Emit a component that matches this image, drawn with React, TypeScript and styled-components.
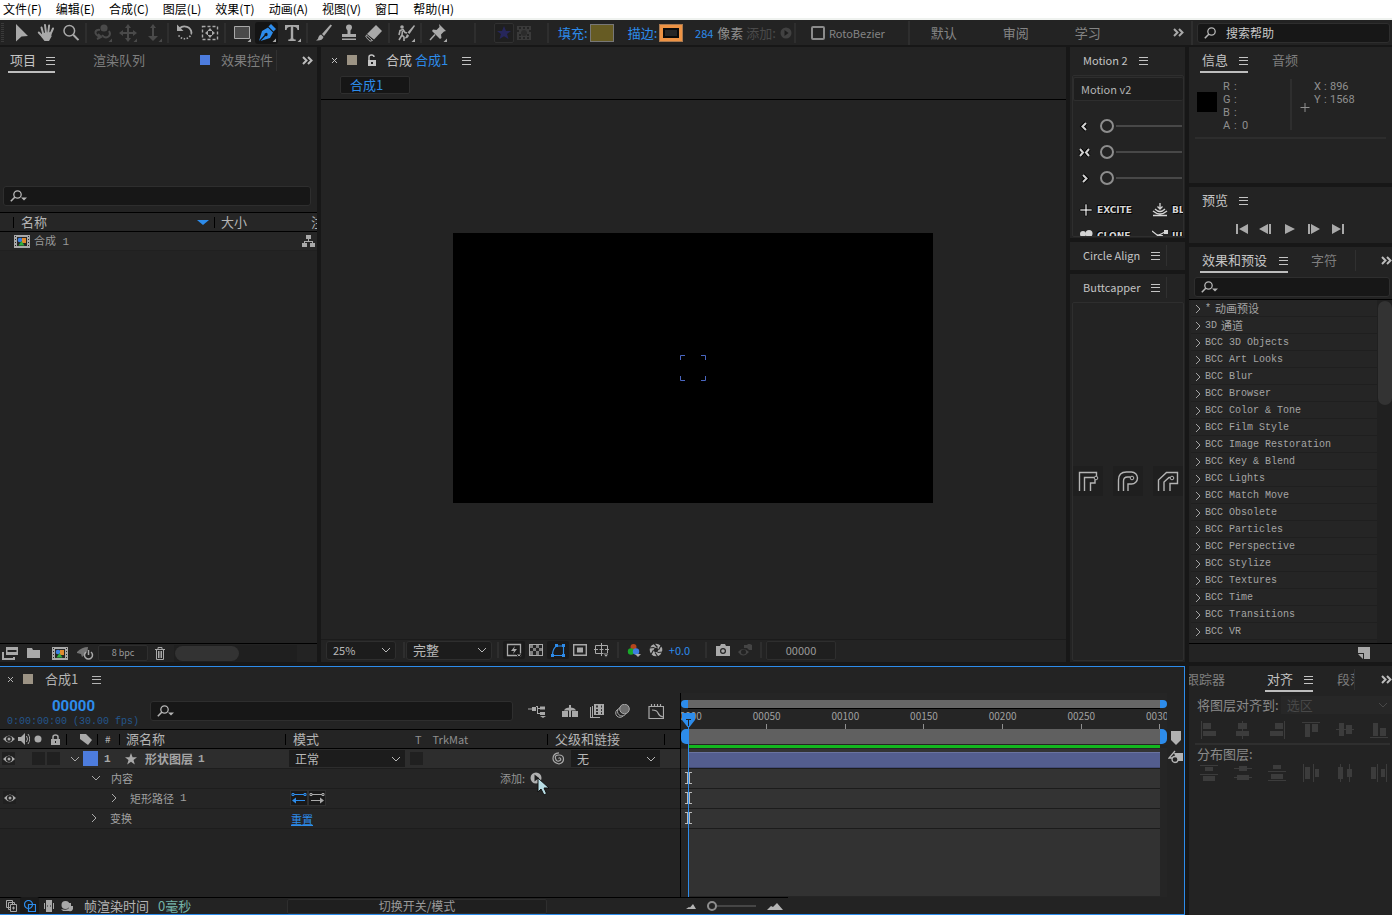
import React from 'react';
import styled, { createGlobalStyle, css } from 'styled-components';

const UI = '"Noto Sans CJK SC", "Noto Sans", sans-serif';
const MONO = '"Liberation Mono", "Noto Sans CJK SC", monospace';
const C = {
  panel: '#232323',
  gap: '#171717',
  field: '#171717',
  line: '#2e2e2e',
  row: '#262626',
  text: '#b4b4b4',
  dim: '#858585',
  off: '#3c3c3c',
  blue: '#2d8ceb',
  icon: '#a9a9a9',
};

const Global = createGlobalStyle`
  * { box-sizing: border-box; }
  body { margin: 0; background: ${C.gap}; font-family: ${UI}; font-size: 13px; line-height: 16px; color: ${C.text}; }
  button, input, select { font: inherit; color: inherit; margin: 0; padding: 0; border: 0; background: none; outline: 0; border-radius: 0; }
  button { display: flex; align-items: center; justify-content: center; white-space: nowrap; }
  svg { display: block; flex: none; }
`;

/* ---------- frame ---------- */
const Shell = styled.div`
  height: 100vh; min-height: 700px; display: flex; flex-direction: column; overflow: hidden; background: ${C.gap};
`;
const Body = styled.div`flex: 1; min-height: 0; display: flex; gap: 4px; margin-top: 2px;`;
const Main = styled.div`flex: 1; min-width: 0; display: flex; flex-direction: column; gap: 4px;`;
const Upper = styled.div`flex: 1; min-height: 0; display: flex; gap: 4px;`;
const Panel = styled.section<{ $w?: number; $h?: number; $grow?: boolean }>`
  display: flex; flex-direction: column; min-width: 0; min-height: 0; overflow: hidden; background: ${C.panel};
  flex: ${p => (p.$grow ? '1' : 'none')};
  ${p => p.$w && css`width: ${p.$w}px;`}
  ${p => p.$h && css`height: ${p.$h}px;`}
`;
const Column = styled.div<{ $w: number }>`flex: none; width: ${p => p.$w}px; display: flex; flex-direction: column; gap: 4px;`;
const Spacer = styled.div<{ $w?: number }>`flex: ${p => (p.$w ? `0 0 ${p.$w}px` : '1')};`;
const VSep = styled.i<{ $l?: number; $r?: number; $h?: number }>`
  flex: none; width: 2px; height: ${p => p.$h ?? 20}px; background: ${C.line};
  margin: 0 ${p => p.$r ?? 3}px 0 ${p => p.$l ?? 2}px;
`;
const Swatch = styled.i<{ $c: string; $s?: number }>`
  flex: none; width: ${p => p.$s ?? 10}px; height: ${p => p.$s ?? 10}px; background: ${p => p.$c};
`;

/* ---------- menu + toolbar ---------- */
const MenuBar = styled.nav`
  flex: none; display: flex; gap: 14px; height: 20px; background: #fff; border-bottom: 2px solid #eff2ef; padding-left: 3px;
`;
const MenuItem = styled.button`color: #000; font-size: 12px;`;
const ToolBar = styled.div`flex: none; height: 25px; display: flex; align-items: center; background: ${C.panel};`;
const Grip = styled.i`
  width: 3px; height: 20px; margin: 0 4px 0 1px;
  background: repeating-linear-gradient(to bottom, #3a3a3a 0 1px, transparent 1px 2px);
`;
const ToolButton = styled.button<{ $on?: boolean; $off?: boolean }>`
  flex: none; width: 25px; height: 22px; color: ${p => (p.$on ? C.blue : p.$off ? '#4a4a4a' : C.icon)};
  ${p => p.$on && css`background: #141414; border-radius: 3px; width: 23px; margin: 0 1px;`}
`;
const ModeButton = styled.button<{ $framed?: boolean }>`
  width: 20px; height: 20px; ${p => p.$framed && css`border: 1px solid #303030; background: #1f1f1f; border-radius: 2px;`}
`;
const BlueLabel = styled.button`color: ${C.blue}; font-size: 13px;`;
const FillSwatch = styled.button`width: 24px; height: 18px; background: #665b23; border: 1px solid #777; margin: 0 14px 0 2px;`;
const StrokeSwatch = styled.button`
  width: 24px; height: 18px; background: #ee9344; border: 1px solid #a8784e; margin: 0 11px 0 2px;
  &::after { content: ''; flex: none; box-sizing: border-box; width: 16px; height: 10px; background: #262626; border: 2px solid #0a0a0a; }
`;
const PxValue = styled.button`color: ${C.blue}; font-size: 11px; width: 20px; margin-right: 3px;`;
const Label = styled.span<{ $c?: string; $s?: number; $mr?: number }>`
  white-space: nowrap; color: ${p => p.$c ?? C.text}; font-size: ${p => p.$s ?? 13}px; margin-right: ${p => p.$mr ?? 0}px;
`;
const CheckLabel = styled.label`
  display: flex; align-items: center; gap: 4px; font-size: 11px; color: ${C.dim}; margin-left: 15px;
  input { appearance: none; width: 14px; height: 14px; border: 2px solid #8b8b8b; border-radius: 2px; }
`;
const Workspace = styled.button`color: ${C.dim}; margin-right: 46px;`;
const Field = styled.label<{ $l?: number; $r?: number; $t?: number; $grow?: boolean; $w?: number }>`
  display: flex; align-items: center; gap: 4px; height: 20px; padding-left: 6px; background: ${C.field};
  border: 1px solid ${C.line}; border-radius: 3px; overflow: hidden; flex: ${p => (p.$grow ? '1' : 'none')};
  margin: ${p => p.$t ?? 0}px ${p => p.$r ?? 0}px 0 ${p => p.$l ?? 0}px;
  ${p => p.$w && css`width: ${p.$w}px;`}
  input { flex: 1; min-width: 0; font-size: 12px; }
  input::placeholder { color: #c8c8c8; opacity: 1; }
`;

/* ---------- tabs ---------- */
const Tabs = styled.div<{ $l?: number; $h?: number }>`
  flex: none; display: flex; align-items: flex-start; height: ${p => p.$h ?? 26}px; padding-left: ${p => p.$l ?? 8}px; white-space: nowrap; overflow: hidden;
`;
const Tab = styled.button<{ $on?: boolean; $line?: boolean; $ml?: number; $gap?: number }>`
  flex: none; gap: ${p => p.$gap ?? 11}px; height: 26px; padding: 2px 0 0 2px; margin-left: ${p => p.$ml ?? 0}px;
  color: ${p => (p.$on ? '#c4c4c4' : '#7e7e7e')};
  border-bottom: 2px solid ${p => (p.$line ? '#bdbdbd' : 'transparent')};
`;
const LatinTab = styled(Tab)`font-size: 11px;`;
const CutTab = styled(Tab)`width: 19px; overflow: hidden; justify-content: flex-start;`;
const CompName = styled.span`padding-right: 4px;`;
const TabEnd = styled.div<{ $r?: number }>`
  flex: none; display: flex; align-items: center; height: 26px; margin-left: auto; padding-right: ${p => p.$r ?? 4}px; color: #bcbcbc;
`;
const Divider = styled.i<{ $ml?: number }>`flex: none; width: 1px; height: 21px; background: #303030; margin: 3px 0 0 ${p => p.$ml ?? 0}px;`;

/* ---------- project ---------- */
const ProjectTable = styled.table`
  width: 100%; margin-top: 6px; border-collapse: collapse; table-layout: fixed; border-top: 1px solid #000;
  th { height: 19px; padding: 0; font-weight: 400; text-align: left; background: ${C.row}; border-bottom: 1px solid #000; white-space: nowrap; overflow: hidden; }
  td { height: 19px; padding: 0; background: ${C.row}; border-bottom: 1px solid #202020; font: 11px/16px ${MONO}; color: #999; }
  td svg { color: ${C.icon}; }
`;
const HeadInner = styled.span<{ $p?: number }>`
  display: flex; align-items: center; &::before { content: ''; width: 1px; height: 11px; background: #000; margin-right: ${p => p.$p ?? 6}px; }
`;
const NameCell = styled.span<{ $p?: number }>`
  display: flex; align-items: center; gap: 4px; padding-left: ${p => p.$p ?? 14}px;
`;
const ItemName = styled.span`white-space: pre; padding-top: 2px;`;
const FlowCell = styled.td`svg { margin-left: -4px; }`;
const Footer = styled.div<{ $line?: string }>`
  flex: none; height: 19px; display: flex; align-items: center; border-top: 1px solid ${p => p.$line ?? '#000'};
`;
const ViewerFooter = styled(Footer)`height: 23px; padding: 0 0 2px 5px;`;
const IconButton = styled.button<{ $w?: number; $bg?: boolean }>`
  flex: none; width: ${p => p.$w ?? 22}px; height: 18px; color: ${C.icon};
  ${p => p.$bg && css`background: #1a1a1a; border-radius: 2px;`}
`;
const BoxButton = styled.button<{ $w: number; $h?: number; $s?: number }>`
  flex: none; width: ${p => p.$w}px; height: ${p => p.$h ?? 16}px; border: 1px solid ${C.line}; border-radius: 2px;
  background: #1f1f1f; font-size: ${p => p.$s ?? 11}px; color: #9a9a9a;
`;
const ScrollTrack = styled.div`
  flex: 1; height: 17px; margin: 0 20px 0 2px; padding: 1px; background: #1f1f1f;
  i { display: block; width: 64px; height: 15px; border-radius: 8px; background: #333; }
`;

/* ---------- composition ---------- */
const CompChip = styled.button`
  width: 70px; height: 18px; margin: 3px 0 5px 19px; padding-left: 9px; justify-content: flex-start;
  color: ${C.blue}; background: #161616; border: 1px solid ${C.line}; border-radius: 2px;
`;
const Viewer = styled.div`
  flex: 1; min-height: 0; display: flex; align-items: center; justify-content: center; padding: 0 1px 4px 0; border-top: 1px solid #000;
`;
const Canvas = styled.div`
  width: 480px; aspect-ratio: 16 / 9; background: #000; display: flex; align-items: center; justify-content: center;
`;
const SelectBox = styled.span<{ $w?: number; $h?: number; $flat?: boolean; $off?: boolean; $s?: number }>`
  position: relative; display: flex; align-items: center; flex: ${p => (p.$w ? 'none' : '1')};
  ${p => p.$w && css`width: ${p.$w}px;`} height: ${p => p.$h ?? 19}px;
  background: ${p => (p.$off ? '#272727' : '#1c1c1c')}; border: ${p => (p.$flat ? '0' : `1px solid ${C.line}`)};
  border-radius: ${p => (p.$flat ? 0 : 3)}px; color: ${p => (p.$off ? '#484848' : '#b8b8b8')};
  select { appearance: none; width: 100%; height: 100%; padding-left: 6px; font-size: ${p => p.$s ?? 13}px; opacity: 1; color: inherit; }
  svg { position: absolute; right: 4px; pointer-events: none; }
`;

/* ---------- scripts ---------- */
const ScriptBox = styled.div`
  flex: 1; min-height: 0; overflow: hidden; margin: 0 1px 1px 2px; border: 1px solid ${C.line}; border-radius: 2px; padding-top: 1px;
  display: flex; flex-direction: column;
`;
const ScriptTitle = styled.button`
  flex: none; height: 24px; justify-content: flex-start; padding-left: 7px; font-size: 11px; background: #1e1e1e; border: 1px solid ${C.line};
  border-right: 0; border-radius: 2px; margin-bottom: 12px;
`;
const SliderRow = styled.label`
  flex: none; height: 26px; display: flex; align-items: center; gap: 7px; padding: 0 1px 0 4px; color: #d0d0d0;
  input { appearance: none; flex: 1; min-width: 0; height: 14px; background: linear-gradient(#484848, #484848) 16px 6px / 100% 2px no-repeat; }
  input::-webkit-slider-thumb { appearance: none; width: 14px; height: 14px; border: 2px solid #8d8d8d; border-radius: 50%; background: ${C.panel}; }
`;
const ScriptGrid = styled.div`flex: none; display: grid; grid-template-columns: 73px 73px; grid-auto-rows: 26px; padding: 6px 0 0 6px;`;
const ScriptButton = styled.button`
  justify-content: flex-start; gap: 4px; font: bold 9px/12px "DejaVu Sans", sans-serif; color: #d4d4d4; text-shadow: 1px 1px 0 #000, -1px -1px 0 #000;
`;
const CapRow = styled.div`flex: 1; display: flex; align-items: center; gap: 10px; padding-bottom: 2px; button { flex: none; width: 30px; height: 30px; background: #1f1f1f; }`;

/* ---------- info / preview ---------- */
const InfoBody = styled.div`
  display: flex; margin: 6px 6px 0 6px; height: 60px; border-bottom: 2px solid #2d2d2d; color: #8f8f8f; padding-left: 2px;
`;
const ColorWell = styled(Swatch)`margin-top: 13px;`;
const Channels = styled.dl<{ $w?: number; $cols: string; $ml: number }>`
  margin: 1px 0 0 ${p => p.$ml}px; ${p => p.$w && css`width: ${p.$w}px;`} font: 11px/13px Roboto, sans-serif;
  display: grid; grid-template-columns: ${p => p.$cols}; grid-auto-rows: 13px;
  dt, dd { margin: 0; white-space: nowrap; }
`;
const Transport = styled.div`display: flex; padding-left: 40px; height: 18px; margin-top: 7px; button { width: 24px; color: #a9a9a9; }`;

/* ---------- effects ---------- */
const EffectsBody = styled.div`flex: 1; min-height: 0; display: flex; margin-top: 2px; border-top: 1px solid #000;`;
const EffectList = styled.ul`
  flex: 1; margin: 0 0 0 2px; padding: 0; list-style: none; overflow: hidden;
  li { height: 17px; border-bottom: 1px solid #1f1f1f; background: #252525; }
  button { height: 16px; gap: 4px; padding: 1px 0 0 4px; font: 10px/15px ${MONO}; color: #a4a4a4; }
`;
const Cjk = styled.span`font: 11px/15px ${UI};`;
const VScroll = styled.div`width: 15px; padding: 1px 0 0 1px; background: #202020; i { display: block; height: 104px; border-radius: 7px; background: #333; }`;

/* ---------- align ---------- */
const AlignLine = styled.div<{ $top?: number; $bottom?: number }>`
  display: flex; align-items: center; gap: 2px; height: 18px; padding-left: 8px; margin: ${p => p.$top ?? 0}px 0 ${p => p.$bottom ?? 0}px;
  font-size: 13px; color: #8a8a8a; white-space: nowrap;
`;
const AlignRow = styled.div`display: flex; gap: 14px; padding-left: 10px; button { flex: none; width: 20px; height: 20px; color: ${C.off}; }`;
const Rule = styled.hr`height: 2px; width: auto; margin: 3px 2px 0 6px; border: 0; background: #2f2f2f;`;

/* ---------- timeline ---------- */
const Timeline = styled.section`
  flex: none; height: 249px; display: flex; flex-direction: column; background: ${C.panel};
  border: 1px solid ${C.blue}; border-left: 0; overflow: hidden;
`;
const TLTitle = styled.div`flex: none; display: flex; align-items: center; height: 26px; padding: 0 0 2px 8px;`;
const TLBody = styled.div`flex: 1; min-height: 0; display: flex;`;
const TLLeft = styled.div`flex: none; width: 681px; border-right: 1px solid #000; display: flex; flex-direction: column;`;
const TLHead = styled.div`flex: none; height: 36px; display: flex; align-items: center;`;
const TimeBlock = styled.div`width: 143px; margin-left: 7px; padding-top: 4px; display: flex; flex-direction: column; gap: 3px;`;
const Frame = styled.button`color: ${C.blue}; font: bold 15px/14px Roboto, sans-serif; height: 14px; margin-right: 10px;`;
const Timecode = styled.span`font: 10px/12px ${MONO}; color: #24568c;`;
const Cols = styled.div<{ $head?: boolean; $sel?: boolean }>`
  flex: none; display: grid; grid-template-columns: 66px 31px 22px 166px 125px 137px 117px 1fr; align-items: center; height: 20px;
  border-bottom: 1px solid ${p => (p.$head ? '#000' : '#1d1d1d')}; background: ${p => (p.$sel ? '#2d2d2d' : p.$head ? '#242424' : '#252525')};
  ${p => p.$head && css`border-top: 1px solid #000;`}
`;
const Cell = styled.div<{ $sep?: boolean; $p?: number; $gap?: number }>`
  display: flex; align-items: center; height: 100%; min-width: 0; white-space: nowrap; gap: ${p => p.$gap ?? 0}px; padding-left: ${p => p.$p ?? 0}px; color: ${C.icon};
  ${p => p.$sep && css`&::before { content: ''; flex: none; width: 1px; height: 11px; background: #000; margin-left: -${p.$p ?? 0}px; margin-right: ${(p.$p ?? 0) - 1 - (p.$gap ?? 0)}px; }`}
`;
const PropRow = styled.div<{ $p: number }>`
  flex: none; height: 20px; display: flex; align-items: center; padding: 0 0 2px ${p => p.$p}px; border-bottom: 1px solid #1d1d1d; background: #252525; color: ${C.icon};
`;
const PropName = styled.button<{ $w: number; $ml: number }>`
  width: ${p => p.$w}px; margin-left: ${p => p.$ml}px; justify-content: flex-start; font-size: 11px; color: #a0a0a0; gap: 6px;
`;
const Mono = styled.span<{ $b?: boolean }>`font: ${p => (p.$b ? 'bold ' : '')}11px/16px ${MONO}; padding-top: 1px;`;
const LayerName = styled.button`font-size: 12px; font-weight: 700; color: #a4a4a4; gap: 5px;`;
const Box = styled.button<{ $ml?: number }>`flex: none; width: 13px; height: 13px; background: #202020; margin-left: ${p => p.$ml ?? 0}px; color: ${C.icon};`;
const PathButton = styled.button`width: 18px; height: 16px; background: #191919; border: 1px solid #303030;`;
const Reset = styled.a`color: ${C.blue}; font-size: 11px; line-height: 14px; text-decoration: underline; padding-top: 2px;`;
const AddButton = styled.button`position: relative; width: 15px; height: 14px; margin-left: 3px;`;
const Pointer = styled.svg`position: absolute; left: 9px; top: 6px; z-index: 3;`;

const TLRight = styled.div`position: relative; flex: 1; min-width: 0; display: flex; flex-direction: column; overflow: hidden; background: #252525; padding-top: 7px;`;
const Span = styled.div<{ $h: number; $c: string; $caps?: boolean; $mb?: number }>`
  flex: none; display: flex; height: ${p => p.$h}px; margin-bottom: ${p => p.$mb ?? 0}px; background: #222;
  &::before, &::after { content: ''; flex: none; width: 7px; ${p => p.$caps && css`background: ${C.blue};`} }
  &::before { border-radius: 5px 0 0 5px; } &::after { border-radius: 0 5px 5px 0; }
  i { flex: 1; background: ${p => p.$c}; }
`;
const Ruler = styled.div`flex: none; height: 21px; margin: 0 7px; display: flex; justify-content: space-between; border-top: 1px solid #000;`;
const Tick = styled.div`
  width: 0; display: flex; flex-direction: column; align-items: center; font-size: 10px; line-height: 13px; color: #a0a0a0;
  &::after { content: ''; flex: none; width: 1px; height: 5px; margin-top: 2px; background: #8f8f8f; }
`;
const Track = styled.div<{ $layer?: boolean }>`
  flex: none; height: 20px; margin-right: 7px; padding-left: 7px; border-bottom: 1px solid #1c1c1c; display: flex; align-items: center; background: #333;
  ${p => p.$layer && css`padding-top: 2px; i { flex: 1; height: 16px; background: #535d8e; border-top: 1px solid #6a73a0; border-bottom: 1px solid #434b76; }`}
  svg { margin: 0 0 2px -3px; }
`;
const TrackFill = styled.div`flex: 1; margin: 0 7px 1px 7px; background: #323232;`;
const Playhead = styled.div`
  position: absolute; left: 1px; top: 20px; bottom: 0; width: 13px; display: flex; flex-direction: column; align-items: center;
  &::after { content: ''; flex: 1; width: 1px; background: ${C.blue}; }
`;
const Side = styled.div`flex: none; width: 17px; display: flex; flex-direction: column; align-items: center; padding-top: 37px; gap: 5px; background: ${C.panel};`;
const TLFoot = styled.div`flex: none; display: flex; align-items: center; height: 17px; width: 788px; border-top: 1px solid #000; padding-left: 1px;`;
const ZoomRange = styled.input`
  && { appearance: none; width: 49px; height: 12px; margin: 0 11px; background: linear-gradient(#464646, #464646) 0 5px / 100% 2px no-repeat; }
  &::-webkit-slider-thumb { appearance: none; width: 10px; height: 10px; border: 2px solid #8d8d8d; border-radius: 50%; background: ${C.panel}; }
`;
const Accent = styled.span`color: ${C.blue};`;

/* ---------- drawings ---------- */
const I = ({ w = 20, h = w, children }: { w?: number; h?: number; children: React.ReactNode }) => (
  <svg width={w} height={h} viewBox={`0 0 ${w} ${h}`} fill="currentColor" aria-hidden="true">{children}</svg>
);
const stroke = { fill: 'none', stroke: 'currentColor' } as const;
const Burger = () => <I w={9} h={9}><path d="M0 1h9v1H0zM0 4h9v1H0zM0 8h9v1H0z" /></I>;
const More = () => <I w={11} h={9}><path d="M1 1l3.500 3.500L1 8M6 1l3.500 3.500L6 8" {...stroke} strokeWidth="2" /></I>;
const Down = () => <I w={10} h={10}><path d="M1 3l4 4 4-4" {...stroke} /></I>;
const Right = () => <I w={6} h={10}><path d="M1 1l4 4-4 4" {...stroke} /></I>;
const SearchIcon = ({ drop }: { drop?: boolean }) => (
  <I w={18} h={12}><circle cx="7.500" cy="4.500" r="3.700" {...stroke} strokeWidth="1.300" /><path d="M5 7L.8 11.200" {...stroke} strokeWidth="1.600" />{drop && <path d="M11 7.500h6L14 10.500z" />}</I>
);
const CloseX = () => <I w={5} h={5}><path d="M0 0l5 5M5 0L0 5" {...stroke} /></I>;
const Eye = () => <I w={12} h={8}><path fillRule="evenodd" d="M0 4Q6-3 12 4 6 11 0 4zm3 0a3 3 0 0 0 6 0 3 3 0 0 0-6 0z" /><circle cx="6" cy="4" r="1.500" /></I>;
const Comp = () => (
  <I w={16} h={13}>
    <path d="M0 0h16v13H0z" /><path d="M3 2h10v9H3z" fill="#262626" />
    <path d="M1 1h1v1H1zM1 4h1v1H1zM1 7h1v1H1zM1 10h1v1H1zM14 1h1v1h-1zM14 4h1v1h-1zM14 7h1v1h-1zM14 10h1v1h-1z" fill="#262626" />
    <circle cx="6" cy="5" r="2.300" fill="#3b7fe0" /><path d="M8 3h4v5H8z" fill="#e08a2e" /><path d="M4.500 10.500L7.500 6l3 4.500z" fill="#2fae3d" />
  </I>
);

const tools: Record<string, React.ReactNode> = {
  select: <path d="M5 1l12 12-6.500.5L5 18.500z" />,
  hand: <g><path d="M6 10l9-1 .5 4.500L13 18H8.500L5.500 14z" /><path d="M7.500 12L5.500 4.500M10 10L9 2M12.200 10l.9-7.500M14.300 11.500L17 5.500M7 14L2.800 9.500" {...stroke} strokeWidth="2" strokeLinecap="round" /></g>,
  zoom: <g {...stroke}><circle cx="8.300" cy="7.800" r="5.300" strokeWidth="1.500" /><path d="M12.200 11.800l5.300 5.300" strokeWidth="2" /></g>,
  orbit: <g {...stroke} strokeWidth="2"><path d="M7 14C0 11 2 6 7 7M9 12c4 5 10 1 7-4M5 11l3 3-4 2" /><circle cx="11" cy="5" r="2.600" fill="currentColor" /></g>,
  pan: <g><path d="M9 3h2v14H9zM3 9h14v2H3z" /><path d="M10 1l3 4H7zM10 19l3-4H7zM1 10l4-3v6zM19 10l-4-3v6z" /></g>,
  dolly: <g><path d="M9 3h2v11H9zM5 13h10l-5 5z" /><path d="M10 1l3 4H7z" /></g>,
  rotate: <g {...stroke}><path d="M4.500 5.500a7 7 0 0 1 12 4.500" strokeWidth="1.800" /><path d="M16.500 10a7 7 0 0 1-13.500 1" strokeDasharray="1.500 1.500" strokeWidth="1.600" /><path d="M2 1.500v6.500h6.500z" fill="currentColor" stroke="none" /></g>,
  behind: <g><path d="M2.500 3.500h15v13h-15z" {...stroke} strokeDasharray="3 2" strokeWidth="1.400" /><path d="M10 5l2.500 3h-5zM10 15l2.500-3h-5zM5 10l3-2.500v5zM15 10l-3-2.500v5z" /></g>,
  rect: <path d="M2.500 3.500h15v12h-15z" fill="#4a4a4a" stroke="currentColor" />,
  pen: <g><path fillRule="evenodd" d="M2 18l3-10 6-3.500 5 5L13 15 3.500 18l5-5a1.600 1.600 0 1 0-1-1z" /><path d="M11.500 3.500L14 1l5 5-2.500 2.500z" /></g>,
  type: <path d="M3 2h14v5h-1.500Q15 3.800 11.200 3.800V15q0 1.500 2.500 1.500V18H6.300v-1.500q2.500 0 2.500-1.500V3.800Q5 3.800 4.500 7H3z" />,
  brush: <g><path d="M18 2.500L10 13 8 11 16.500 1.500z" /><path d="M7 11.500l2.500 2.500Q8.500 18 2 17.500 4.500 16 4.500 14 5 12 7 11.500z" /></g>,
  stamp: <path d="M10 1.500a3 3 0 0 1 3 3q0 1.500-1.500 3V11H17v3H3v-3h5.500V7.500Q7 6 7 4.500a3 3 0 0 1 3-3zM3 15.500h14V17H3z" />,
  eraser: <g><path d="M12 2l6 6-8 8.500-7-5.500z" /><path d="M2.500 12l6 5.500L6 18.200 1.800 14z" fill="none" stroke="currentColor" /></g>,
  roto: <g><circle cx="6" cy="4" r="1.800" /><path d="M3 12l1-4.500 3-1 2 3 2 .5M6.500 8l-.5 4 2 2v4M6 12l-3 5" {...stroke} strokeWidth="1.600" /><path d="M19 3l-5.500 8-2-1.500L18 2zM11 11l2 1.500Q12 16 8 15.500 10 14.500 11 11z" /></g>,
  pin: <g><path d="M11 1l7 7-2 .5-3 3 .5 3.500-1.500 1-8-8L5 6.500l3.500.5 3-3z" /><path d="M7 11.500L2 17" {...stroke} strokeWidth="1.500" /></g>,
};
const Tool = ({ n, more, on, off }: { n: string; more?: boolean; on?: boolean; off?: boolean }) => (
  <ToolButton $on={on} $off={off} aria-label={n}><I>{tools[n]}{more && <path d="M19 15.500v3.500h-3.500z" fill={off ? '#4a4a4a' : '#a9a9a9'} />}</I></ToolButton>
);

const alignShapes: number[][][] = [
  [[2, 1, 1, 18], [4, 3, 8, 6], [4, 11, 13, 5]],
  [[9, 1, 1, 18], [5, 3, 9, 6], [3, 11, 13, 5]],
  [[17, 1, 1, 18], [8, 3, 8, 6], [3, 11, 13, 5]],
  [[1, 2, 18, 1], [4, 4, 5, 13], [11, 4, 6, 8]],
  [[1, 9, 18, 1], [4, 3, 5, 13], [11, 5, 6, 9]],
  [[1, 17, 18, 1], [4, 3, 5, 13], [11, 8, 6, 8]],
];
const spreadShapes: number[][][] = [
  [[1, 2, 18, 1], [1, 11, 18, 1], [6, 4, 8, 4], [4, 13, 12, 5]],
  [[1, 5, 18, 1], [1, 14, 18, 1], [6, 3, 8, 5], [4, 12, 12, 5]],
  [[1, 8, 18, 1], [1, 17, 18, 1], [6, 2, 8, 4], [4, 11, 12, 5]],
  [[2, 1, 1, 18], [12, 1, 1, 18], [4, 4, 5, 12], [14, 6, 4, 8]],
  [[5, 1, 1, 18], [14, 1, 1, 18], [3, 4, 5, 12], [12, 6, 5, 8]],
  [[8, 1, 1, 18], [17, 1, 1, 18], [2, 4, 5, 12], [12, 6, 4, 8]],
];
const Shapes = ({ sets }: { sets: number[][][] }) => (
  <AlignRow>{sets.map((s, i) => <button key={i} disabled><I>{s.map(([x, y, width, height], j) => <rect key={j} {...{ x, y, width, height }} />)}</I></button>)}</AlignRow>
);

const Select = ({ value, label, ...rest }: { value: string; label: string; $w?: number; $h?: number; $flat?: boolean; $off?: boolean; $s?: number }) => (
  <SelectBox {...rest}><select aria-label={label} disabled={rest.$off} defaultValue={value}><option>{value}</option></select><Down /></SelectBox>
);

const effects = ['3D Objects', 'Art Looks', 'Blur', 'Browser', 'Color & Tone', 'Film Style', 'Image Restoration', 'Key & Blend', 'Lights', 'Match Move', 'Obsolete', 'Particles', 'Perspective', 'Stylize', 'Textures', 'Time', 'Transitions', 'VR'];

/* ---------- sections ---------- */
const Toolbar = () => (
  <ToolBar>
    <Grip />
    <Tool n="select" /><Tool n="hand" /><Tool n="zoom" /><VSep />
    <Tool n="orbit" off more /><Tool n="pan" off more /><Tool n="dolly" off more /><VSep />
    <Tool n="rotate" /><Tool n="behind" /><VSep />
    <Tool n="rect" more /><Tool n="pen" on more /><Tool n="type" more /><VSep />
    <Tool n="brush" /><Tool n="stamp" /><Tool n="eraser" /><VSep />
    <Tool n="roto" more /><VSep /><Tool n="pin" more /><VSep $l={24} $r={18} />
    <ModeButton $framed aria-label="shape"><I w={14}><path d="M7 0l2 5h5l-4 3 1.500 5L7 10.200 2.500 13 4 8 0 5h5z" fill="#26265a" /></I></ModeButton>
    <ModeButton aria-label="mask"><I w={14}><path d="M0 0h14v14H0z" fill="#3a3a3a" /><path d="M2 1h2v2H2zM6 1h2v2H6zM10 1h2v2h-2zM0 4h2v2H0zM12 4h2v2h-2zM2 8h2v2H2zM10 8h2v2h-2zM2 11h2v2H2zM6 11h2v2H6zM10 11h2v2h-2z" fill="#242424" /><circle cx="7" cy="7" r="3" fill="#2b2b2b" /></I></ModeButton>
    <VSep $l={13} $r={9} />
    <BlueLabel>填充:</BlueLabel><FillSwatch aria-label="填充颜色" />
    <BlueLabel>描边:</BlueLabel><StrokeSwatch aria-label="描边颜色" />
    <PxValue>284</PxValue><Label $c="#8f8f8f" $mr={3}>像素</Label><Label $c="#4a4a4a" $mr={4}>添加:</Label>
    <I w={12}><circle cx="6" cy="6" r="5.500" fill="#414141" /><path d="M4.500 3l4 3-4 3z" fill="#1c1c1c" /></I>
    <VSep $l={2} $r={0} />
    <CheckLabel><input type="checkbox" />RotoBezier</CheckLabel>
    <VSep $l={23} $r={21} $h={24} />
    <Workspace>默认</Workspace><Workspace>审阅</Workspace><Workspace>学习</Workspace>
    <Spacer />
    <IconButton $w={26} aria-label="更多工作区"><More /></IconButton>
    <VSep $l={0} $r={4} $h={24} />
    <Field $w={193} $r={2}><SearchIcon /><input aria-label="搜索帮助" placeholder="搜索帮助" /></Field>
  </ToolBar>
);

const Project = () => (
  <Panel $w={317}>
    <Tabs>
      <Tab $on $line $gap={10}>项目<Burger /></Tab>
      <Tab $ml={36}>渲染队列</Tab>
      <Tab $ml={53}><Swatch $c="#4d7cdd" />效果控件</Tab>
      <Divider $ml={3} />
      <TabEnd><More /></TabEnd>
    </Tabs>
    <Field $l={3} $r={6} $t={113}><SearchIcon drop /><input aria-label="搜索项目" /></Field>
    <ProjectTable>
      <colgroup><col style={{ width: 214 }} /><col style={{ width: 91 }} /><col /></colgroup>
      <thead><tr>
        <th><NameCell $p={13}><HeadInner $p={3} />名称<Spacer /><I w={12} h={5}><path d="M0 0h12L6 5z" fill={C.blue} /></I><Spacer $w={1} /></NameCell></th>
        <th><HeadInner>大小</HeadInner></th>
        <th><HeadInner>注</HeadInner></th>
      </tr></thead>
      <tbody><tr>
        <td><NameCell><Comp /><ItemName>合成 1</ItemName></NameCell></td>
        <td />
        <FlowCell><I w={14} h={14}><path d="M5 1h5v4H5zM1 9h5v4H1zM9 9h5v4H9zM7 5h1v2H7zM3 7h9v1H3zM3 7h1v2H3zM11 7h1v2h-1z" /></I></FlowCell>
      </tr></tbody>
    </ProjectTable>
    <Spacer />
    <Footer>
      <IconButton $w={20}><I w={18} h={14}><path d="M5 1h12v8H5zM6.500 4v2h9V4zM1 6h2v6h9v-1h2v3H1z" fillRule="evenodd" /></I></IconButton>
      <IconButton $w={28}><I w={14} h={12}><path d="M0 1h5l1 2h7v8H0z" /></I></IconButton>
      <IconButton $w={24}><Comp /></IconButton>
      <IconButton $w={26}><I w={18} h={14}><path d="M1 6Q6 1 12 1q0 6-6 10l-1-3-4-1z" opacity=".6" /><path d="M10 6a4 4 0 1 0 5 0M12.500 4v5" {...stroke} strokeWidth="1.500" /></I></IconButton>
      <BoxButton $w={50} $s={9}>8 bpc</BoxButton>
      <IconButton $w={24}><I w={12} h={13}><path d="M1 2.500h10M4 2V.5h4V2M2.500 3v9.500h7V3M4.500 4v7M6 4v7M7.500 4v7" {...stroke} /></I></IconButton>
      <ScrollTrack><i /></ScrollTrack>
    </Footer>
  </Panel>
);

const Composition = () => (
  <Panel $grow>
    <Tabs $l={9}>
      <Tab $on $gap={10}><CloseX /><Swatch $c="#9c9384" /><I w={9} h={13}><path d="M1 6h8v6H1z" /><path d="M2 6V3q0-2 2.500-2T7 3" {...stroke} strokeWidth="1.500" /><path d="M4 8h2v2H4z" fill="#232323" /></I>
        <CompName>合成 <Accent>合成1</Accent></CompName><Burger /></Tab>
    </Tabs>
    <CompChip>合成1</CompChip>
    <Viewer><Canvas><I w={26}><path d="M.5 5V.5H5M21 .5h4.500V5M.5 21v4.500H5M21 25.500h4.500V21" fill="none" stroke="#4a66c0" /></I></Canvas></Viewer>
    <ViewerFooter $line="#1b1b1b">
      <Select label="放大率" value="25%" $w={70} $s={11} /><VSep $l={7} $r={1} $h={16} />
      <Select label="分辨率" value="完整" $w={86} /><VSep $l={5} $r={4} $h={16} />
      <IconButton $bg><I w={16}><path d="M1.500 2.500h13v11h-13z" {...stroke} strokeWidth="1.300" /><path d="M9 4L5 9h3l-1 3 4-5H8z" /><path d="M10 12h6l-3 3z" stroke="#1a1a1a" /></I></IconButton>
      <IconButton><I w={14} h={12}><path fillRule="evenodd" d="M0 0h14v12H0zM1 1v10h12V1z" /><path d="M1 1h3v3H1zM7 1h3v3H7zM4 4h3v3H4zM10 4h3v3h-3zM1 7h3v4H1zM7 7h3v4H7z" opacity=".7" /></I></IconButton>
      <IconButton $bg><I w={14}><g color={C.blue}><path d="M1.500 12.500q0-7 4-9.500h7v9.500z" {...stroke} strokeWidth="1.200" /><path d="M0 11h3v3H0zM4 1h3v3H4zM11 1h3v3h-3zM11 11h3v3h-3z" /></g></I></IconButton>
      <IconButton><I w={14} h={12}><path d="M.7.7h12.600v10.600H.7z" {...stroke} strokeWidth="1.400" /><path d="M4 3.500h6v5H4z" /></I></IconButton>
      <IconButton><I w={16}><path d="M1.500 3.500h12v8h-12zM7.500 1v13M0 7.500h4M11 7.500h4M5.500 7.500h4" {...stroke} /><path d="M9 12h6l-3 3.500z" stroke="#232323" /></I></IconButton>
      <VSep $l={4} $r={4} $h={16} />
      <IconButton><I w={14}><circle cx="6.500" cy="4" r="3" fill="#b5461c" /><circle cx="4" cy="8.500" r="3.200" fill="#19a82a" /><circle cx="9" cy="8.500" r="3.200" fill="#3e7de0" /><path d="M8 11h6l-3 3z" /></I></IconButton>
      <IconButton><I w={14}><circle cx="7" cy="7" r="4.300" {...stroke} strokeWidth="4" /><path d="M4.500 0l4 4.500M12 2.500L9.500 7M14 9l-5.500.5M9 14l-3-4.500M2 11.500L4.500 7M0 5l5.500-.5" stroke="#232323" strokeWidth="1.200" /></I></IconButton>
      <IconButton $w={25}><Label $c={C.blue} $s={11}>+0.0</Label></IconButton>
      <VSep $l={13} $r={5} $h={16} />
      <IconButton><I w={14} h={12}><path fillRule="evenodd" d="M0 2h4l1-2h4l1 2h4v10H0zM7 4a3 3 0 1 0 0 6 3 3 0 0 0 0-6z" /><circle cx="7" cy="7" r="1.800" /></I></IconButton>
      <IconButton><I w={14} h={12}><g fill="#444"><path fillRule="evenodd" d="M0 8q5-6 11 0-6 7-11 0zm3 0a2.500 2.500 0 1 0 5 0 2.500 2.500 0 0 0-5 0z" /><path d="M6 1h3l1-1h2l2 1v5h-3L9 4H6z" /></g></I></IconButton>
      <VSep $l={4} $r={4} $h={16} />
      <BoxButton $w={70} $h={19}>00000</BoxButton>
    </ViewerFooter>
  </Panel>
);

const ease = ['M7 2L3.500 5.500 7 9', 'M1 2l3 3.500L1 9M10 2L7 5.500 10 9', 'M4 2l3.500 3.500L4 9'];
const caps = [
  'M6.500 25V6.500h17v4M22 13.500V17h-4.500v8M11.500 25V11.500H21',
  'M5.500 25V14q0-8 8-8h5a6 6 0 0 1 0 12H15v7M10.500 25V15q0-4 4-4h3',
  'M5.500 25V14l8-7.500h11v11h-7.500V25M11 25v-9l5-4.500h1',
];
const Scripts = () => (
  <Column $w={115}>
    <Panel $h={191}>
      <Tabs $l={11} $h={28}><LatinTab $on>Motion 2<Burger /></LatinTab></Tabs>
      <ScriptBox>
        <ScriptTitle>Motion v2</ScriptTitle>
        {ease.map((d, i) => <SliderRow key={i}><I w={16} h={11}><g transform="translate(2 0)"><path d={d} fill="none" stroke="#000" strokeWidth="4" /><path d={d} {...stroke} strokeWidth="2" /></g></I><input type="range" defaultValue={0} aria-label={`ease ${i + 1}`} /></SliderRow>)}
        <ScriptGrid>
          <ScriptButton><I w={14}><path d="M6 1h2v5h5v2H8v5H6V8H1V6h5z" stroke="#000" strokeWidth=".6" /></I>EXCITE</ScriptButton>
          <ScriptButton><I w={16} h={14}><path d="M8 0v6M5.500 3.500L8 6l2.500-2.500M3 6q5 5 10 0M1 8q7 6 14 0M1 12.500h14" {...stroke} strokeWidth="1.300" /></I>BLEND</ScriptButton>
          <ScriptButton><I w={14}><circle cx="4" cy="5" r="3" /><circle cx="10" cy="4.500" r="3.500" /><path d="M1 7h12v6H1z" /></I>CLONE</ScriptButton>
          <ScriptButton><I w={16} h={14}><path d="M0 2l5 4 6 1M5 7l8-4" {...stroke} strokeWidth="1.300" /><path d="M12 1h4v4h-4z" /></I>JUMP</ScriptButton>
        </ScriptGrid>
      </ScriptBox>
    </Panel>
    <Panel $h={28}><Tabs $l={11} $h={28}><LatinTab $on>Circle Align<Burger /></LatinTab><Divider $ml={6} /></Tabs></Panel>
    <Panel $grow>
      <Tabs $l={11} $h={28}><LatinTab $on>Buttcapper<Burger /></LatinTab><Divider $ml={6} /></Tabs>
      <ScriptBox>
        <CapRow>
          {caps.map((d, i) => (
            <button key={i} aria-label={`cap ${i + 1}`}><I w={30}><path d={d} {...stroke} strokeWidth="1.400" /><circle cx={i ? 19 : 23} cy="12" r="1.800" fill="#232323" stroke="currentColor" /></I></button>
          ))}
        </CapRow>
      </ScriptBox>
    </Panel>
  </Column>
);

const RightColumn = () => (
  <Column $w={203}>
    <Panel $h={136}>
      <Tabs $l={11}><Tab $on $line>信息<Burger /></Tab><Tab $ml={22}>音频</Tab></Tabs>
      <InfoBody>
        <ColorWell $c="#000" $s={20} />
        <Channels $ml={6} $w={67} $cols="11px 8px 1fr">
          <dt>R</dt><dd>:</dd><dd /><dt>G</dt><dd>:</dd><dd /><dt>B</dt><dd>:</dd><dd /><dt>A</dt><dd>:</dd><dd>0</dd>
        </Channels>
        <VSep $h={51} $l={0} $r={8} />
        <I w={10} h={56}><path d="M5 24v9M.5 28.500h9" {...stroke} /></I>
        <Channels $ml={4} $cols="10px 6px 1fr"><dt>X</dt><dd>:</dd><dd>896</dd><dt>Y</dt><dd>:</dd><dd>1568</dd></Channels>
      </InfoBody>
    </Panel>
    <Panel $h={56}>
      <Tabs $l={11}><Tab $on>预览<Burger /></Tab></Tabs>
      <Transport>
        {['M1 1h2v10H1zM13 1v10L4 6z', 'M9 1v10L0 6zM10 1h2v10h-2z', 'M2 1l10 5-10 5z', 'M1 1h2v10H1zM4 1l9 5-9 5z', 'M1 1l9 5-9 5zM11 1h2v10h-2z'].map((d, i) => <button key={i} aria-label={`transport ${i + 1}`}><I w={13} h={12}><path d={d} /></I></button>)}
      </Transport>
    </Panel>
    <Panel $grow>
      <Tabs $l={11}><Tab $on $line $gap={12}>效果和预设<Burger /></Tab><Tab $ml={21}>字符</Tab><Divider $ml={18} /><TabEnd $r={0}><More /></TabEnd></Tabs>
      <Field $l={5} $r={2} $t={4}><SearchIcon drop /><input aria-label="搜索效果" /></Field>
      <EffectsBody>
        <EffectList>
          <li><button><Right />*<Cjk>动画预设</Cjk></button></li>
          <li><button><Right />3D<Cjk>通道</Cjk></button></li>
          {effects.map(e => <li key={e}><button><Right />BCC {e}</button></li>)}
        </EffectList>
        <VScroll><i /></VScroll>
      </EffectsBody>
      <Footer><Spacer /><IconButton aria-label="新建"><I w={12}><path d="M0 0h12v12H6V6H0zM0 7h5v5z" /></I></IconButton><Spacer $w={17} /></Footer>
    </Panel>
    <Panel $h={249}>
      <Tabs $l={0}><Tab $ml={-5}>跟踪器</Tab><Tab $on $line $ml={40}>对齐<Burger /></Tab><CutTab $ml={22}>段落</CutTab><Divider /><TabEnd $r={0}><More /></TabEnd></Tabs>
      <AlignLine $top={4} $bottom={6}>将图层对齐到:<Select label="对齐到" value="选区" $flat $off $h={18} /></AlignLine>
      <Shapes sets={alignShapes} />
      <Rule />
      <AlignLine>分布图层:</AlignLine>
      <Shapes sets={spreadShapes} />
    </Panel>
  </Column>
);

const beam = <I w={7} h={12}><path d="M0 .5h3M4 .5h3M0 11.500h3M4 11.500h3M2.500 1v10M4.500 1v10" {...stroke} stroke="#b8b8b8" /></I>;

const TimelinePanel = () => (
  <Timeline>
    <TLTitle><CloseX /><Spacer $w={10} /><Swatch $c="#9c9384" /><Spacer $w={12} /><Label $mr={14}>合成1</Label><Burger /></TLTitle>
    <TLBody>
      <TLLeft>
        <TLHead>
          <TimeBlock><Frame>00000</Frame><Timecode>0:00:00:00 (30.00 fps)</Timecode></TimeBlock>
          <Field $grow><SearchIcon drop /><input aria-label="搜索图层" /></Field>
          <Spacer $w={14} />
          <IconButton $w={20}><I w={18} h={14}><path d="M0 5h8M8 2.500h2M9.500 2v8M9.500 4.500h3M9.500 9.500h3" {...stroke} /><path d="M4 3h4v4H4zM12 2.500h5v3h-5zM12 8h5v3h-5zM12 12h6l-3 2z" /></I></IconButton><Spacer $w={10} />
          <IconButton $w={26}><I w={16} h={14}><path d="M0 7h6v6H0zM10 7h6v6h-6zM7 1h2v12H7z" /><path d="M2 6.500q1-3 6-3t6 3z" /></I></IconButton>
          <IconButton $w={26}><I w={15} h={14}><path d="M5 0h10v11H5zM1 3h1v11H1zM3 2h1v11H3zM1 13h10v1H1z" /><path d="M7 1.500h2v2H7zM7 5h2v2H7zM7 8h2v2H7zM12 1.500h1v2h-1zM12 5h1v2h-1zM12 8h1v2h-1z" fill="#333" /></I></IconButton>
          <IconButton $w={26}><I w={15} h={14}><circle cx="5" cy="9" r="4.300" {...stroke} /><circle cx="7" cy="7.500" r="4.500" fill="#232323" stroke="currentColor" /><circle cx="9.500" cy="5" r="4.800" fill="#6c6c6c" stroke="currentColor" /></I></IconButton>
          <Spacer $w={7} />
          <IconButton $w={28}><I w={16} h={15}><path d="M1 2.500h14.500v12H1zM3.500 0v3M6.500 0v3M9.500 0v3M12.500 0v3M4 6q5 0 6 3t5 4" {...stroke} strokeWidth="1.200" /></I></IconButton>
          <Spacer $w={10} />
        </TLHead>
        <Cols $head>
          <Cell $p={3} $gap={3}><Eye /><I w={12} h={12}><path d="M0 4h3l4-4v12L3 8H0z" /><path d="M8.500 3q2 3 0 6M10 1q3.500 5 0 10" {...stroke} /></I><I w={10}><circle cx="5" cy="5" r="3.500" /></I><Spacer $w={1} /><I w={10} h={11}><path d="M1 5h9v6H1z" /><path d="M3 5V3q0-2 2.500-2T8 3v2" {...stroke} strokeWidth="1.500" /><path d="M5 7h1v2H5z" fill="#222" /></I></Cell>
          <Cell $sep $p={13}><I w={13} h={12}><path d="M1 1h6l6 6-4 5-8-6z" /></I></Cell>
          <Cell $sep $p={8}><Label $s={10}>#</Label></Cell>
          <Cell $sep $p={7}><Label>源名称</Label></Cell>
          <Cell $sep $p={8}><Label>模式</Label></Cell>
          <Cell $p={5} $gap={11}><Label $s={11} $c="#8f8f8f">T</Label><Label $s={11} $c="#8f8f8f">TrkMat</Label></Cell>
          <Cell $sep $p={8}><Label>父级和链接</Label></Cell>
          <Cell $sep $p={2} />
        </Cols>
        <Cols $sel>
          <Cell $p={2}><Box aria-label="显示"><Eye /></Box><Box $ml={17} aria-label="独奏" /><Box $ml={2} aria-label="锁定" /></Cell>
          <Cell $p={4} $gap={3}><Down /><Swatch $c="#4d7cdd" $s={15} /></Cell>
          <Cell $p={7}><Mono $b>1</Mono></Cell>
          <Cell $p={6} $gap={8}><I w={12}><path d="M6 0l1.600 4.300H12L8.500 7 9.800 11.500 6 8.800l-3.800 2.700L3.500 7 0 4.300h4.400z" /></I><LayerName>形状图层<Mono $b>1</Mono></LayerName></Cell>
          <Cell $p={4}><Select label="模式" value="正常" $w={116} $h={17} $flat $s={12} /></Cell>
          <Cell><Box aria-label="保留基础透明度" /></Cell>
          <Cell $p={5} $gap={6}><I w={13} h={13}><path d="M6.500 6.500q1-1.500 2 0t-1.500 2.500T3.500 6.500 7 3t4.500 4-4.500 5S1 10.500 1 6.500 4 1 7 .8" {...stroke} strokeWidth="1.200" /></I><Select label="父级" value="无" $w={89} $h={17} $flat $s={12} /></Cell>
          <Cell />
        </Cols>
        <PropRow $p={91}><Down /><PropName $w={389} $ml={10}>内容</PropName><Label $s={11} $c="#959595">添加:</Label>
          <AddButton aria-label="添加"><I w={12}><circle cx="6" cy="6" r="5.500" fill="#b0b0b0" /><path d="M4.500 2.500L9 6l-4.500 3.500z" fill="#1c1c1c" /></I>
            <Pointer width="13" height="19" viewBox="0 0 13 19"><path d="M1 1v14l3-3 3 6 2.500-1.500L7 11h5z" fill="#b7dce4" stroke="#111" /></Pointer></AddButton></PropRow>
        <PropRow $p={3}><Box aria-label="显示"><Eye /></Box><Spacer $w={95} /><Right /><PropName $w={160} $ml={13}>矩形路径<Mono>1</Mono></PropName>
          <PathButton aria-label="正向"><I w={16} h={12}><g color={C.blue}><path d="M1 1.500h2v2H1zM13 1.500h2v2h-2zM3 2.500h10M3 8.500h11" {...stroke} /><path d="M1 8.500l4-3v6z" /></g></I></PathButton>
          <PathButton aria-label="反向"><I w={16} h={12}><path d="M1 1.500h2v2H1zM13 1.500h2v2h-2zM3 2.500h10M2 8.500h11" {...stroke} /><path d="M15 8.500l-4-3v6z" /></I></PathButton></PropRow>
        <PropRow $p={91}><Right /><PropName $w={181} $ml={13}>变换</PropName><Reset href="#reset">重置</Reset></PropRow>
      </TLLeft>
      <TLRight>
        <Span $h={8} $c="#666" $caps><i /></Span>
        <Ruler>{['00000', '00050', '00100', '00150', '00200', '00250', '00300'].map(t => <Tick key={t}>{t}</Tick>)}</Ruler>
        <Span $h={15} $c="#606060" $caps $mb={1}><i /></Span>
        <Span $h={3} $c="#12b81e" $mb={1}><i /></Span>
        <Track $layer><i /></Track><Track>{beam}</Track><Track>{beam}</Track><Track>{beam}</Track>
        <TrackFill />
        <Playhead><I w={13} h={14}><path d="M0 0h13v7l-5.500 7h-2L0 7z" fill={C.blue} /><path d="M4 6h5v1H7v6H6V7H4z" fill="#222" /></I></Playhead>
      </TLRight>
      <Side>
        <I w={12} h={15}><path d="M1 1h10v9l-5 5-5-5z" fill="#b0b0b0" /></I>
        <I w={15} h={14}><path d="M6 3h9v8H9z" /><path d="M7 1L1 8h4" {...stroke} strokeWidth="1.300" /><circle cx="7" cy="9.500" r="3" fill="#232323" stroke="currentColor" strokeWidth="1.300" /></I>
      </Side>
    </TLBody>
    <TLFoot>
      <IconButton $w={19}><I w={12}><path d="M1.500.5h6v7h-6zM3.500 2.500h6v7h-6z" {...stroke} /><path d="M5.500 4.500h6v7h-6zM7 8h3M8.500 6.500v3" fill="#232323" stroke="currentColor" /></I></IconButton>
      <IconButton $w={19} $bg><I w={12}><g color={C.blue}><circle cx="4.500" cy="4.500" r="4" {...stroke} strokeWidth="1.200" /><path d="M4.500 4.500h7v7h-7z" {...stroke} strokeWidth="1.200" /></g></I></IconButton>
      <IconButton $w={19}><I w={12}><path d="M3 0h6v12H3zM1 3h1v6H1zM10 3h1v6h-1z" /><path d="M4 5h1v2H4zM7 5h1v2H7z" fill="#666" /></I></IconButton>
      <IconButton $w={19}><I w={13} h={12}><circle cx="4.500" cy="5" r="4" /><path d="M0 9q6 2 8-1V3h2v3h2v3q-1 3-4 2H2z" /></I></IconButton>
      <Spacer $w={7} />
      <Label $mr={9}>帧渲染时间</Label><Label $c="#74b3a8">0毫秒</Label>
      <Spacer />
      <BoxButton $w={260} $h={15} $s={12}>切换开关/模式</BoxButton>
      <Spacer $w={139} />
      <I w={10} h={5}><path d="M0 5l3-2 1 .5L7 0l3 5z" /></I>
      <ZoomRange type="range" defaultValue={0} aria-label="时间缩放" />
      <I w={16} h={7}><path d="M0 7l4-4 2 1 4-4 6 7z" /></I><Spacer $w={5} />
    </TLFoot>
  </Timeline>
);

export default function App() {
  return (
    <Shell>
      <Global />
      <MenuBar>{['文件(F)', '编辑(E)', '合成(C)', '图层(L)', '效果(T)', '动画(A)', '视图(V)', '窗口', '帮助(H)'].map(m => <MenuItem key={m}>{m}</MenuItem>)}</MenuBar>
      <Toolbar />
      <Body>
        <Main>
          <Upper><Project /><Composition /><Scripts /></Upper>
          <TimelinePanel />
        </Main>
        <RightColumn />
      </Body>
    </Shell>
  );
}
